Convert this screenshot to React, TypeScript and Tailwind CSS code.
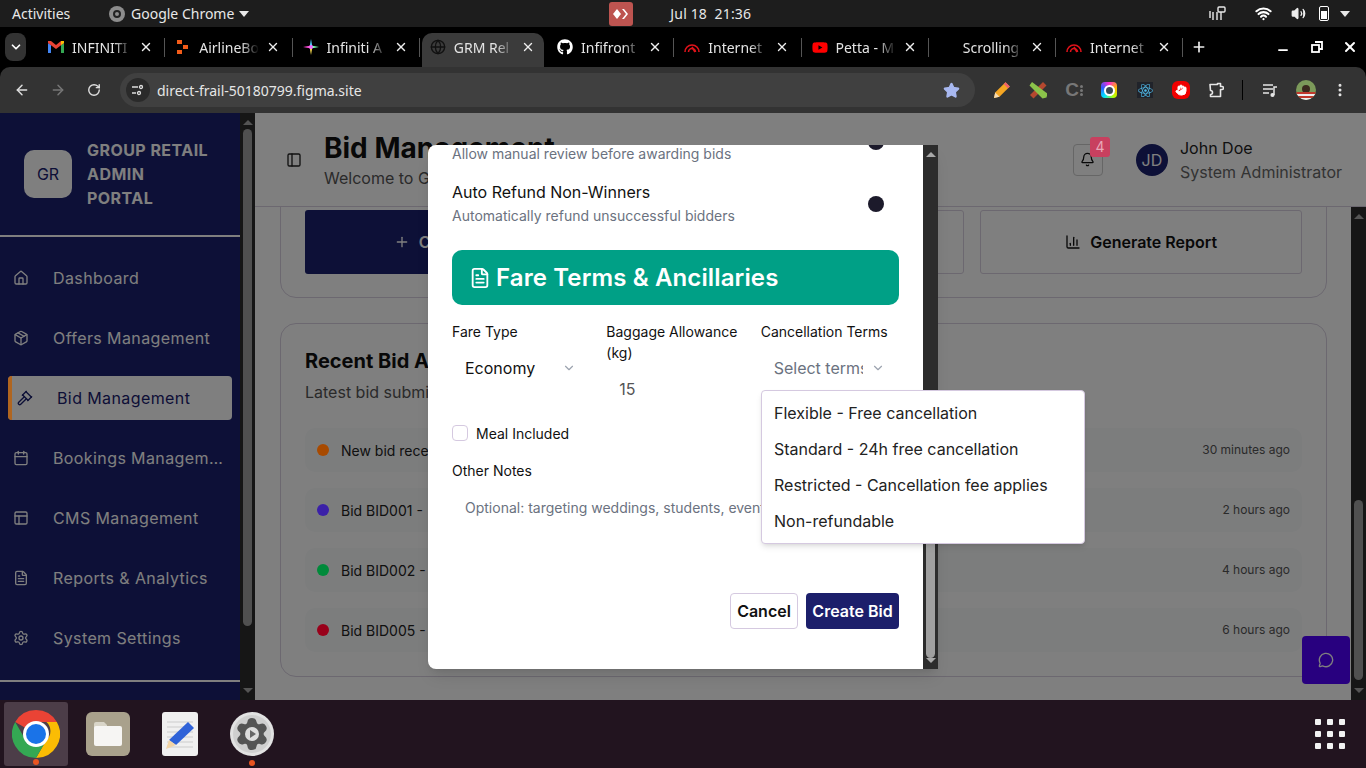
import type { ReactNode } from 'react';
import {
  ArrowLeft, ArrowRight, Bell, Calendar, ChartColumn, ChevronDown, FileText, Gavel, Globe, Hand, House,
  Minus, MoreVertical, MessageCircle, Package, PanelLeft, PanelsTopLeft, Plus, RotateCw, Settings,
  Star, Volume2, Wifi, X,
} from 'lucide-react';
import { FaGithub, FaReact, FaYoutube } from 'react-icons/fa';

function GmailIcon() {
  return (
    <svg viewBox="0 0 16 14" className="h-[14px] w-[16px]">
      <path d="M0 3v10h3V5z" fill="#4285f4" />
      <path d="M16 3v10h-3V5z" fill="#34a853" />
      <path d="M0 1l3 0 5 4 5-4 3 0v2l-8 6-8-6z" fill="#ea4335" />
      <path d="M13 1l3 0v2l-3 2z" fill="#fbbc04" />
    </svg>
  );
}

function NodesIcon() {
  return (
    <svg viewBox="0 0 16 16" className="h-4 w-4">
      <rect x="2" y="1" width="5" height="4" fill="#f25c19" />
      <rect x="8" y="6" width="5" height="4" fill="#f25c19" />
      <rect x="2" y="11" width="5" height="4" fill="#f25c19" />
    </svg>
  );
}

function SparkIcon() {
  return (
    <svg viewBox="0 0 16 16" className="h-4 w-4">
      <path d="M8 0l1.2 6.8L8 8 6.8 6.8z" fill="#4fd1ff" />
      <path d="M16 8l-6.8 1.2L8 8l1.2-1.2z" fill="#7dffb0" />
      <path d="M8 16l-1.2-6.8L8 8l1.2 1.2z" fill="#ffe14f" />
      <path d="M0 8l6.8-1.2L8 8 6.8 9.2z" fill="#ff4fd8" />
      <circle cx="8" cy="8" r="2" fill="#f06bff" />
    </svg>
  );
}

function GaugeIcon() {
  return (
    <svg viewBox="0 0 16 16" className="h-4 w-4" fill="none" stroke="#e0121a" strokeWidth="1.6">
      <path d="M1 13a7 7 0 0 1 14 0" />
      <path d="M4.5 13a3.5 3.5 0 0 1 7 0" />
      <path d="M8 8l3 5" />
    </svg>
  );
}

const tabs: { title: string; icon: ReactNode; active?: boolean }[] = [
  { title: 'INFINITI', icon: <GmailIcon /> },
  { title: 'AirlineBo', icon: <NodesIcon /> },
  { title: 'Infiniti A', icon: <SparkIcon /> },
  { title: 'GRM Rel', icon: <Globe size={16} color="#111" />, active: true },
  { title: 'Infifront', icon: <FaGithub size={16} color="#fff" /> },
  { title: 'Internet', icon: <GaugeIcon /> },
  { title: 'Petta - M', icon: <FaYoutube size={17} color="#f00" /> },
  { title: 'Scrolling', icon: <span className="h-4 w-4" /> },
  { title: 'Internet', icon: <GaugeIcon /> },
];

function TopBar() {
  return (
    <div className="flex h-[27px] items-center bg-[#1d1d1d] pl-3 pr-4 font-['Noto_Sans',sans-serif] text-[14px] text-[#e8e8e8]">
      <span className="w-[97px]">Activities</span>
      <span className="flex h-4 w-4 items-center justify-center rounded-full bg-[#8d8d8d]">
        <span className="h-2 w-2 rounded-full border-2 border-[#222]" />
      </span>
      <span className="ml-[6px]">Google Chrome</span>
      <span className="ml-[5px] h-0 w-0 border-x-[5px] border-t-[6px] border-x-transparent border-t-[#e8e8e8]" />
      <div className="ml-[360px] flex h-6 w-6 items-center justify-center rounded-[3px] bg-[#bd5450]">
        <svg viewBox="0 0 16 12" className="h-3 w-4" fill="#fff">
          <path d="M4 1l4 5-4 5-4-5z" />
          <path d="M9 1h2l4 5-4 5H9l4-5z" />
        </svg>
      </div>
      <span className="ml-[37px] whitespace-pre tracking-[0.15px]">Jul 18  21:36</span>
      <div className="ml-auto flex items-center">
        <svg viewBox="0 0 18 16" className="h-4 w-[18px]" fill="none" stroke="#e8e8e8" strokeWidth="1.4">
          <path d="M1 5v7M4 14V6M8 14V6M12 14V6" />
          <rect x="9" y="1" width="7" height="5" rx="1" />
        </svg>
        <Wifi size={17} color="#fff" strokeWidth={3} className="ml-[28px]" />
        <Volume2 size={15} color="#eee" fill="#eee" className="ml-[19px]" />
        <div className="ml-[13px] flex h-[15px] w-[10px] items-end rounded-[2px] border border-white p-px">
          <div className="h-[8px] w-full bg-white" />
        </div>
        <span className="ml-[11px] h-0 w-0 border-x-[5px] border-t-[6px] border-x-transparent border-t-[#e8e8e8]" />
      </div>
    </div>
  );
}

function Tab({ title, icon, active }: { title: string; icon: ReactNode; active?: boolean }) {
  return (
    <div className="relative flex h-[34px] w-[127.25px] items-center pb-[6px] pl-[10px]">
      {active && <span className="absolute inset-y-0 left-[2px] right-[3px] rounded-t-[10px] bg-[#3b3b3b]" />}
      <span className="relative flex w-4 justify-center">{icon}</span>
      <span className="relative ml-2 w-[60px] overflow-hidden whitespace-nowrap text-[14px] text-[#e4e4e4] [mask-image:linear-gradient(to_right,#000_70%,transparent)]">
        {title}
      </span>
      <X size={14} color="#eee" strokeWidth={2.4} className="relative ml-[7px]" />
      {!active && <span className="absolute right-0 top-[5px] h-[19px] w-px bg-[#555]" />}
    </div>
  );
}

function TabStrip() {
  return (
    <div className="flex h-10 items-end bg-black font-['Noto_Sans',sans-serif]">
      <div className="mb-[6px] ml-[5px] mr-[12px] flex h-[28px] w-[21px] items-center justify-center rounded-lg bg-[#333]">
        <ChevronDown size={14} color="#fff" strokeWidth={3} />
      </div>
      {tabs.map((tab, i) => <Tab key={i} {...tab} />)}
      <div className="flex h-[34px] flex-1 items-center pb-[6px]">
        <Plus size={16} color="#eee" strokeWidth={2.5} className="ml-[8px]" />
        <Minus size={14} color="#fff" strokeWidth={3} className="ml-[69px] mt-[6px]" />
        {/* chrome's restore button, two squares on top of each other */}
        <svg viewBox="0 0 12 12" className="ml-[21px] h-3 w-3" fill="none" stroke="#fff" strokeWidth="1.8">
          <path d="M4 1h7v7H8" />
          <rect x="1" y="4" width="7" height="7" />
        </svg>
        <X size={16} color="#fff" strokeWidth={3} className="ml-[19px]" />
      </div>
    </div>
  );
}

function Toolbar() {
  return (
    <div className="flex h-[46px] items-center rounded-t-[10px] bg-[#333] font-['Noto_Sans',sans-serif]">
      <ArrowLeft size={16} color="#dedede" strokeWidth={2.2} className="ml-[14px]" />
      <ArrowRight size={16} color="#777" strokeWidth={2.2} className="ml-5" />
      <RotateCw size={14} color="#dedede" strokeWidth={2.4} className="ml-[21px]" />
      <div className="ml-[19px] flex h-[34px] w-[855px] items-center rounded-full bg-[#404040] pl-[6px] pr-[15px]">
        <span className="flex h-6 w-6 items-center justify-center rounded-full bg-[#2a2a2a]">
          <svg viewBox="0 0 14 14" className="h-[14px] w-[14px]" fill="none" stroke="#ddd" strokeWidth="1.3">
            <path d="M1 4h6M1 10h4" />
            <circle cx="10" cy="4" r="1.5" />
            <circle cx="8" cy="10" r="1.5" />
          </svg>
        </span>
        <span className="ml-[7px] text-[14px] text-[#e6e6e6]">direct-frail-50180799.figma.site</span>
        <Star size={17} color="#a8b8f0" fill="#a8b8f0" className="ml-auto" />
      </div>
      <ExtensionIcons />
    </div>
  );
}

function ExtensionIcons() {
  return (
    <div className="ml-[18px] flex items-center">
      <svg viewBox="0 0 18 18" className="h-[18px] w-[18px]">
        <path d="M1 17l1.2-5.5L12.5 1.2l4.3 4.3L6.5 15.8z" fill="#f5a623" />
        <path d="M1 17l1.2-5.5 4.3 4.3z" fill="#f6dcb4" />
        <path d="M12.5 1.2l4.3 4.3-1.8 1.8-4.3-4.3z" fill="#ee5f6c" />
      </svg>
      <svg viewBox="0 0 18 18" className="ml-[18px] h-[18px] w-[18px]">
        <path d="M14 1l3.5 3.5L4.5 17.5 1 14z" fill="#b5482f" />
        <path d="M3 1L.5 4.5 13.5 17.5l4-1 1-4z" fill="#8bc34a" />
      </svg>
      <span className="ml-[18px] flex w-[18px] items-center justify-center gap-px">
        <span className="font-['Liberation_Sans',sans-serif] text-[19px] font-bold leading-5 text-[#777]">C</span>
        <span className="flex flex-col gap-px">
          <span className="h-[3px] w-[3px] rounded-full bg-[#777]" />
          <span className="h-[3px] w-[3px] rounded-full bg-[#777]" />
          <span className="h-[3px] w-[3px] rounded-full bg-[#777]" />
        </span>
      </span>
      <span className="ml-[18px] flex h-4 w-4 items-center justify-center rounded-[4px] bg-[conic-gradient(#ff2bd0,#ffb300,#b6ff00,#00e5ff,#2b5cff,#ff2bd0)]">
        <span className="h-[11px] w-[11px] rounded-full border-2 border-white bg-[#3a4a55]" />
      </span>
      <span className="ml-5 flex h-4 w-4 items-center justify-center bg-[#20232a]">
        <FaReact size={15} color="#4fb8e6" />
      </span>
      <span className="ml-[19px] flex h-[18px] w-[18px] items-center justify-center rounded-[6px] bg-[#f00000]">
        <Hand size={12} color="#fff" fill="#fff" />
      </span>
      <svg viewBox="0 0 16 16" className="ml-[18px] h-4 w-4" fill="none" stroke="#e6e6e6" strokeWidth="1.6" strokeLinejoin="round">
        <path d="M2 2.5h7.5V1.5h3v3h1.5a1.2 1.2 0 0 1 0 3H12.5v7H2.5v-2a2 2 0 0 0 0-4z" />
      </svg>
      <span className="ml-[18px] h-[20px] w-px bg-black" />
      <svg viewBox="0 0 16 16" className="ml-[19px] h-4 w-4" fill="none" stroke="#e6e6e6" strokeWidth="1.5">
        <path d="M1 3h10M1 7h10M1 11h6M12 13V5h3" />
        <circle cx="10.5" cy="13" r="1.3" fill="#e6e6e6" />
      </svg>
      <span className="ml-[18px] flex h-5 w-5 flex-col justify-end overflow-hidden rounded-full bg-[#7c9a5a]">
        <span className="mx-auto mb-[-1px] h-2 w-2 rounded-full bg-[#3b2a1e]" />
        <span className="h-2 w-full bg-[repeating-linear-gradient(#c0392b_0_2px,#eee_2px_4px)]" />
      </span>
      <MoreVertical size={16} color="#e6e6e6" strokeWidth={2.5} className="ml-4" />
    </div>
  );
}

const navItems = [
  { label: 'Dashboard', icon: House },
  { label: 'Offers Management', icon: Package },
  { label: 'Bid Management', icon: Gavel, active: true },
  { label: 'Bookings Management', icon: Calendar },
  { label: 'CMS Management', icon: PanelsTopLeft },
  { label: 'Reports & Analytics', icon: FileText },
  { label: 'System Settings', icon: Settings },
];

function Sidebar() {
  return (
    <aside className="flex h-full w-[240px] shrink-0 flex-col overflow-hidden bg-[#1a206e] text-white">
      <div className="flex h-[124px] shrink-0 items-center gap-[15px] border-b-2 border-white pl-6">
        <div className="flex h-12 w-12 items-center justify-center rounded-[10px] bg-white text-[16px] text-[#1a206e]">GR</div>
        <div className="text-[16px] font-bold leading-6 tracking-[0.45px]">
          <div>GROUP RETAIL</div>
          <div>ADMIN</div>
          <div>PORTAL</div>
        </div>
      </div>
      <nav className="flex shrink-0 flex-col gap-4 border-b-2 border-white px-2 pb-5 pt-[19px]">
        {navItems.map(({ label, icon: Icon, active }) => (
          <div
            key={label}
            className={'relative flex h-11 items-center gap-6 rounded-[4px] text-[16px] tracking-[0.4px] ' + (active ? 'bg-white pl-[9px] pr-[5px] text-[#1a206e]' : 'px-[5px]')}
          >
            {/* the accent stays bright through the dim layer, same as the dots below */}
            {active && <span className="absolute inset-y-0 left-0 z-10 w-1 rounded-l-[4px] bg-[#b0651f]" />}
            <Icon size={16} className="shrink-0" />
            <span className="truncate">{label}</span>
          </div>
        ))}
      </nav>
    </aside>
  );
}

function Scrollbar({ thumbTop, thumbHeight }: { thumbTop: string; thumbHeight: string }) {
  return (
    <div className="flex h-full w-[15px] shrink-0 flex-col items-center bg-[#2c2c2c]">
      <span className="mt-[7px] h-0 w-0 shrink-0 border-x-[5px] border-b-[5px] border-x-transparent border-b-[#a8a8a8]" />
      <span className={'w-[9px] shrink-0 rounded-full bg-[#a0a0a0] ' + thumbTop + ' ' + thumbHeight} />
      <span className="mb-[7px] mt-auto h-0 w-0 shrink-0 border-x-[5px] border-t-[5px] border-x-transparent border-t-[#a8a8a8]" />
    </div>
  );
}

function Header() {
  return (
    <header className="flex h-[94px] shrink-0 items-center border-b border-[#d8d0e0] bg-white pl-[31px] pr-6">
      <PanelLeft size={16} color="#222" />
      <div className="ml-[22px]">
        <h1 className="text-[28px] font-bold leading-9 text-[#111]">Bid Management</h1>
        <p className="text-[16px] leading-6 text-[#555]">Welcome to Group Retail Admin Portal</p>
      </div>
      <div className="relative ml-auto flex h-8 w-[30px] items-center justify-center rounded-[4px] border border-[#ccc]">
        <Bell size={15} color="#111" />
        <span className="absolute -right-[8px] -top-[8px] z-10 flex h-5 w-5 items-center justify-center rounded-[3px] bg-[#c8405f] text-[14px] text-[#e8a8b8]">4</span>
      </div>
      <div className="ml-[33px] flex h-8 w-8 items-center justify-center rounded-full bg-[#1a206e] text-[16px] text-white">JD</div>
      <div className="ml-3 text-[16px] leading-6">
        <div className="text-[#222]">John Doe</div>
        <div className="text-[#666]">System Administrator</div>
      </div>
    </header>
  );
}

const activity = [
  { text: 'New bid received from customer', time: '30 minutes ago', dot: 'bg-[#a84a00]' },
  { text: 'Bid BID001 -\u00a0\u00a0awarded to passenger', time: '2 hours ago', dot: 'bg-[#3b20a8]' },
  { text: 'Bid BID002 -\u00a0\u00a0payment confirmed', time: '4 hours ago', dot: 'bg-[#008a3a]' },
  { text: 'Bid BID005 -\u00a0\u00a0refund processed', time: '6 hours ago', dot: 'bg-[#99001a]' },
];

function Content() {
  return (
    <div className="flex min-w-0 flex-1 flex-col justify-end gap-[25px] overflow-hidden pb-[23px] pl-[25px] pr-6">
      <section className="shrink-0 rounded-2xl border border-[#d8d0e0] bg-white px-6 pb-[23px] pt-6">
        <h2 className="mb-6 text-[20px] font-bold">Quick Actions</h2>
        <div className="grid grid-cols-3 gap-4 text-[16px] font-semibold">
          <button className="flex h-16 items-center justify-center gap-[9px] rounded-[3px] bg-[#1a206e] text-white">
            <Plus size={16} /> Create New Bid
          </button>
          <button className="flex h-16 items-center justify-center rounded-[3px] border border-[#d8d0e0]">View All Bids</button>
          <button className="flex h-16 items-center justify-center gap-[9px] rounded-[3px] border border-[#d8d0e0] text-[#111]">
            <ChartColumn size={16} /> Generate Report
          </button>
        </div>
      </section>
      <section className="h-[354px] shrink-0 rounded-2xl border border-[#d8d0e0] bg-white px-6 pt-[23px]">
        <h2 className="text-[20px] font-bold leading-7 text-[#111]">Recent Bid Activity</h2>
        <p className="mt-[5px] text-[16px] leading-6 text-[#555]">Latest bid submissions and updates</p>
        <div className="mt-[24px] flex flex-col gap-4">
          {activity.map(row => (
            <div key={row.time} className="flex h-11 items-center gap-3 rounded-[10px] bg-[#f9fafb] px-3">
              <span className={'relative z-10 h-3 w-3 rounded-full ' + row.dot} />
              <span className="text-[14px] text-[#222]">{row.text}</span>
              <span className="ml-auto text-[12px] text-[#555]">{row.time}</span>
            </div>
          ))}
        </div>
      </section>
    </div>
  );
}

function Toggle() {
  return <span className="h-4 w-4 shrink-0 rounded-full bg-[#1c1a2b]" />;
}

function SettingRow({ title, hint }: { title: string; hint: string }) {
  return (
    <div className="flex h-12 shrink-0 items-center justify-between pr-[15px]">
      <div>
        <div className="text-[16px] leading-6 text-[#111]">{title}</div>
        <div className="text-[14px] leading-6 text-[#6b7280]">{hint}</div>
      </div>
      <Toggle />
    </div>
  );
}

function BidDialog() {
  return (
    <div className="absolute left-[428px] top-[32px] z-20 flex h-[524px] w-[510px] overflow-hidden rounded-l-lg bg-white shadow-lg">
      <div className="flex min-w-0 flex-1 flex-col justify-end px-6 pb-10">
        <SettingRow title="Manual Review" hint="Allow manual review before awarding bids" />
        <div className="mt-[14px]">
          <SettingRow title="Auto Refund Non-Winners" hint="Automatically refund unsuccessful bidders" />
        </div>
        <div className="mt-[22px] flex h-[55px] shrink-0 items-center gap-[5px] rounded-[10px] bg-[#00a086] pl-[17px] text-white">
          <FileText size={22} />
          <span className="text-[24px] font-semibold tracking-[0.12px]">Fare Terms &amp; Ancillaries</span>
        </div>
        <div className="mt-[16px] grid h-[94px] shrink-0 grid-cols-3 gap-4 text-[14px] leading-[21px] text-[#111]">
          <div>
            <div>Fare Type</div>
            <div className="mt-[8px] flex h-9 items-center pl-[13px] pr-[14px] text-[16px]">
              <span>Economy</span>
              <ChevronDown size={14} color="#9ca3af" className="ml-auto" />
            </div>
          </div>
          <div>
            <div>Baggage Allowance (kg)</div>
            <div className="mt-[14px] pl-[13px] text-[16px] leading-6 text-[#555]">15</div>
          </div>
          <div>
            <div className="whitespace-nowrap">Cancellation Terms</div>
            <div className="mt-[8px] flex h-9 items-center pl-[13px] pr-[14px] text-[16px] text-[#6b7280]">
              <span className="w-[89px] overflow-hidden whitespace-nowrap">Select terms</span>
              <ChevronDown size={14} color="#9ca3af" className="ml-auto" />
            </div>
          </div>
        </div>
        <label className="mt-[10px] flex h-4 shrink-0 items-center gap-2 text-[14px] text-[#111]">
          <span className="h-4 w-4 rounded-[4px] border border-[#d5c9e0]" />
          Meal Included
        </label>
        <div className="mt-[19px] shrink-0 text-[14px] leading-[21px] text-[#111]">Other Notes</div>
        <div className="mt-[16px] h-[96px] shrink-0 overflow-hidden whitespace-nowrap pl-[13px] text-[14px] leading-[21px] text-[#6b7280]">
          Optional: targeting weddings, students, events
        </div>
        <div className="flex shrink-0 justify-end gap-2 text-[16px] font-semibold">
          <button className="h-9 w-[68px] rounded-[4px] border border-[#d5c9e0] text-[#111]">Cancel</button>
          <button className="h-9 w-[93px] rounded-[4px] bg-[#1c1f6b] text-white">Create Bid</button>
        </div>
      </div>
      <Scrollbar thumbTop="mt-[340px]" thumbHeight="h-[161px]" />
    </div>
  );
}

function TermsMenu() {
  return (
    <ul className="absolute left-[761px] top-[277px] z-30 w-[324px] rounded-[4px] border border-[#d5c9e0] bg-white py-[4px] text-[16px] text-[#222] shadow-md">
      {['Flexible - Free cancellation', 'Standard - 24h free cancellation', 'Restricted - Cancellation fee applies', 'Non-refundable'].map(term => (
        <li key={term} className="flex h-9 items-center px-3">{term}</li>
      ))}
    </ul>
  );
}

function Page() {
  return (
    <div className="relative flex h-[587px] font-['Inter',sans-serif]">
      <Sidebar />
      <Scrollbar thumbTop="mt-[4px]" thumbHeight="h-[497px]" />
      <main className="flex min-w-0 flex-1 flex-col bg-white">
        <Header />
        <div className="flex min-h-0 flex-1">
          <Content />
          <Scrollbar thumbTop="mt-[281px]" thumbHeight="h-[180px]" />
        </div>
      </main>
      <button className="absolute left-[1302px] top-[523px] flex h-12 w-12 items-center justify-center rounded-[4px] bg-[#5000ff]">
        <MessageCircle size={16} color="#fff" />
      </button>
      <div className="absolute inset-0 bg-black/50" />
      <BidDialog />
      <TermsMenu />
    </div>
  );
}

function ChromeLogo() {
  return (
    <svg viewBox="0 0 48 48" className="h-12 w-12">
      <path d="M24 0a24 24 0 0 1 20.8 12H24a12 12 0 0 0-10.4 6L3.2 12A24 24 0 0 1 24 0z" fill="#ea4335" />
      <path d="M44.8 12A24 24 0 0 1 24 48l10.4-18a12 12 0 0 0 0-18z" fill="#fbbc04" />
      <path d="M3.2 12l10.4 18A12 12 0 0 0 34.4 30L24 48A24 24 0 0 1 3.2 12z" fill="#34a853" />
      <circle cx="24" cy="24" r="13" fill="#fff" />
      <circle cx="24" cy="24" r="10" fill="#1a73e8" />
    </svg>
  );
}

function Dock() {
  return (
    <div className="flex h-[68px] items-center bg-[#22141f] pl-1 pr-[21px]">
      <div className="relative flex h-16 w-16 items-center justify-center rounded-[3px] bg-[#4c3d48]">
        <ChromeLogo />
        <span className="absolute bottom-[1px] left-[29px] h-[6px] w-[6px] rounded-full bg-[#e95420]" />
      </div>
      <div className="ml-[18px] flex h-11 w-11 items-center justify-center rounded-[6px] bg-[#a9a18c]">
        <svg viewBox="0 0 32 28" className="h-7 w-8">
          <path d="M2 4a2 2 0 0 1 2-2h8l3 3v6H2z" fill="#d9d5c8" />
          <path d="M2 8a2 2 0 0 1 2-2h24a2 2 0 0 1 2 2v16a2 2 0 0 1-2 2H4a2 2 0 0 1-2-2z" fill="#f6f5f3" />
        </svg>
      </div>
      <div className="ml-8 flex h-11 w-9 items-center justify-center rounded-[3px] bg-[#f0f0f0]">
        <svg viewBox="0 0 36 44" className="h-11 w-9">
          <path d="M5 10h26M5 15h26M5 20h26M5 25h26M5 30h26M5 35h26" stroke="#ccc" strokeWidth="1" />
          <path d="M26 10l6 6-18 17-7-5z" fill="#2f62d8" />
          <path d="M7 28l7 5-10 4z" fill="#f2d4a6" />
        </svg>
      </div>
      <div className="relative ml-8 flex h-11 w-11 items-center justify-center rounded-full bg-[#e2e2e2]">
        <span className="flex h-[38px] w-[38px] items-center justify-center rounded-full bg-[#cfcfcf]">
          <Settings size={36} color="#555" fill="#555" strokeWidth={1.5} />
        </span>
        <span className="absolute left-[15px] top-[15px] flex h-[14px] w-[14px] items-center justify-center rounded-full bg-[#ddd]">
          <span className="ml-px h-0 w-0 border-y-[4px] border-l-[6px] border-y-transparent border-l-[#666]" />
        </span>
        <span className="absolute -bottom-[10px] left-[19px] h-[6px] w-[6px] rounded-full bg-[#e95420]" />
      </div>
      <div className="ml-auto grid grid-cols-3 gap-[6px]">
        {Array.from({ length: 9 }, (_, i) => (
          <span key={i} className="h-[6px] w-[6px] rounded-[1px] bg-[#f2f2f2]" />
        ))}
      </div>
    </div>
  );
}

export default function App() {
  return (
    <div className="flex h-[768px] w-[1366px] flex-col overflow-hidden bg-black">
      <TopBar />
      <TabStrip />
      <Toolbar />
      <Page />
      <Dock />
    </div>
  );
}
